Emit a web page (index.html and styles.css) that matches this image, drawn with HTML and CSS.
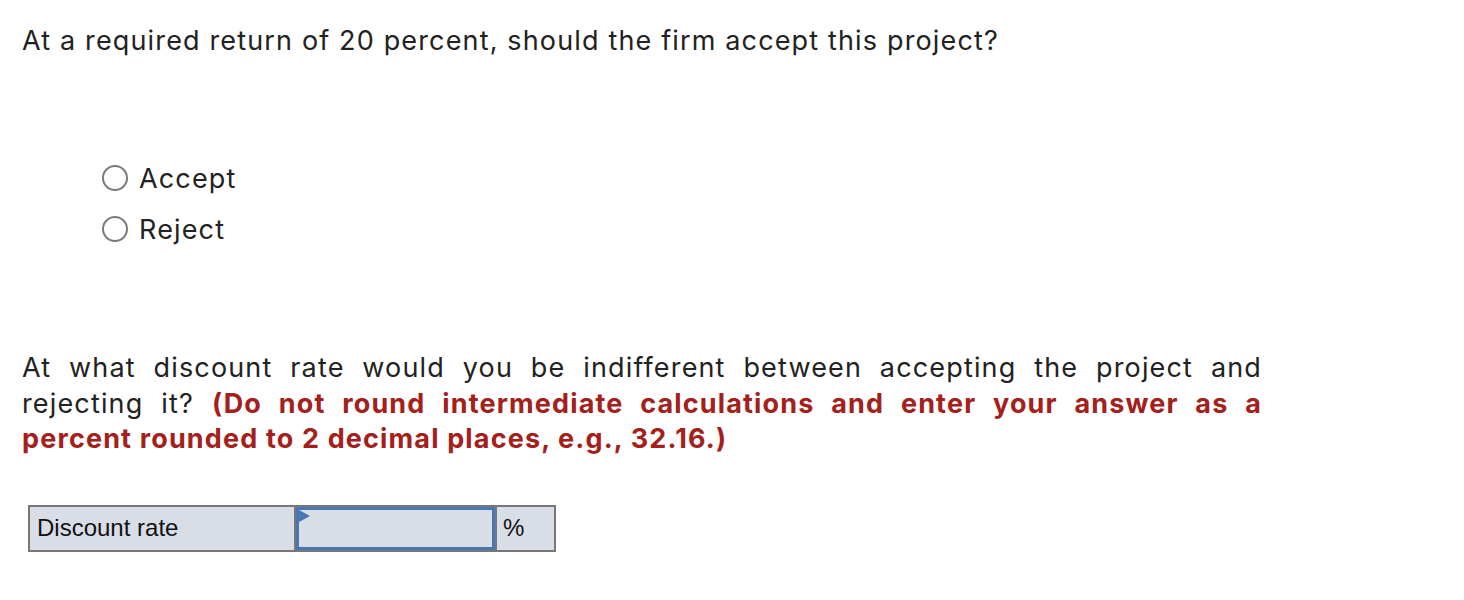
FILE: index.html
```html
<!DOCTYPE html>
<html>
<head>
<meta charset="utf-8">
<link rel="stylesheet" href="styles.css">
</head>
<body>
<div class="page">
  <p class="question">At a required return of 20 percent, should the firm accept this project?</p>
  <div class="options">
    <label class="option"><span class="radio"></span><span>Accept</span></label>
    <label class="option"><span class="radio"></span><span>Reject</span></label>
  </div>
  <p class="question2">At what discount rate would you be indifferent between accepting the project and rejecting it? <strong class="hint">(Do not round intermediate calculations and enter your answer as a percent rounded to 2 decimal places, e.g., 32.16.)</strong></p>
  <div class="answer">
    <div class="cell label">Discount rate</div>
    <div class="cell input"><span class="flag"></span></div>
    <div class="cell unit">%</div>
  </div>
</div>
</body>
</html>
```

FILE: styles.css
```css
html, body {
  margin: 0;
  padding: 0;
  background: #fff;
}
.page {
  padding: 23px 0 0 22px;
  width: 1240px;
  font-family: Inter, "Noto Sans", sans-serif;
  color: #222;
  font-size: 27px;
  letter-spacing: 1.15px;
}
.question {
  margin: 0;
  line-height: 36px;
}
.options {
  display: flex;
  flex-direction: column;
  gap: 15px;
  padding: 101px 0 0 80px;
}
.option {
  display: flex;
  align-items: center;
  gap: 11px;
  height: 36px;
}
.radio {
  width: 26px;
  height: 26px;
  border: 2px solid #7b7b7b;
  border-radius: 50%;
  box-sizing: border-box;
}
.question2 {
  margin: 103px 0 0 0;
  line-height: 35.5px;
  text-align: justify;
}
.hint {
  color: #a4201b;
  font-weight: 700;
}
.answer {
  display: flex;
  margin: 48px 0 0 6px;
  width: 528px;
  height: 47px;
  border: 2px solid #777;
  box-sizing: border-box;
  background: #d9dde6;
  font-family: "Liberation Sans", Arial, sans-serif;
  font-size: 24px;
  letter-spacing: 0;
  color: #111;
}
.cell {
  display: flex;
  align-items: center;
  box-sizing: border-box;
}
.label {
  width: 266px;
  padding-left: 7px;
  border-right: 2px solid #777;
}
.input {
  position: relative;
  width: 199px;
  border: 3px solid #4a77b4;
}
.flag {
  position: absolute;
  left: 0;
  top: 0;
  width: 0;
  height: 0;
  border-top: 6px solid transparent;
  border-bottom: 6px solid transparent;
  border-left: 11px solid #4a77b4;
}
.unit {
  flex: 1;
  padding-left: 6px;
  border-left: 2px solid #777;
}
```
